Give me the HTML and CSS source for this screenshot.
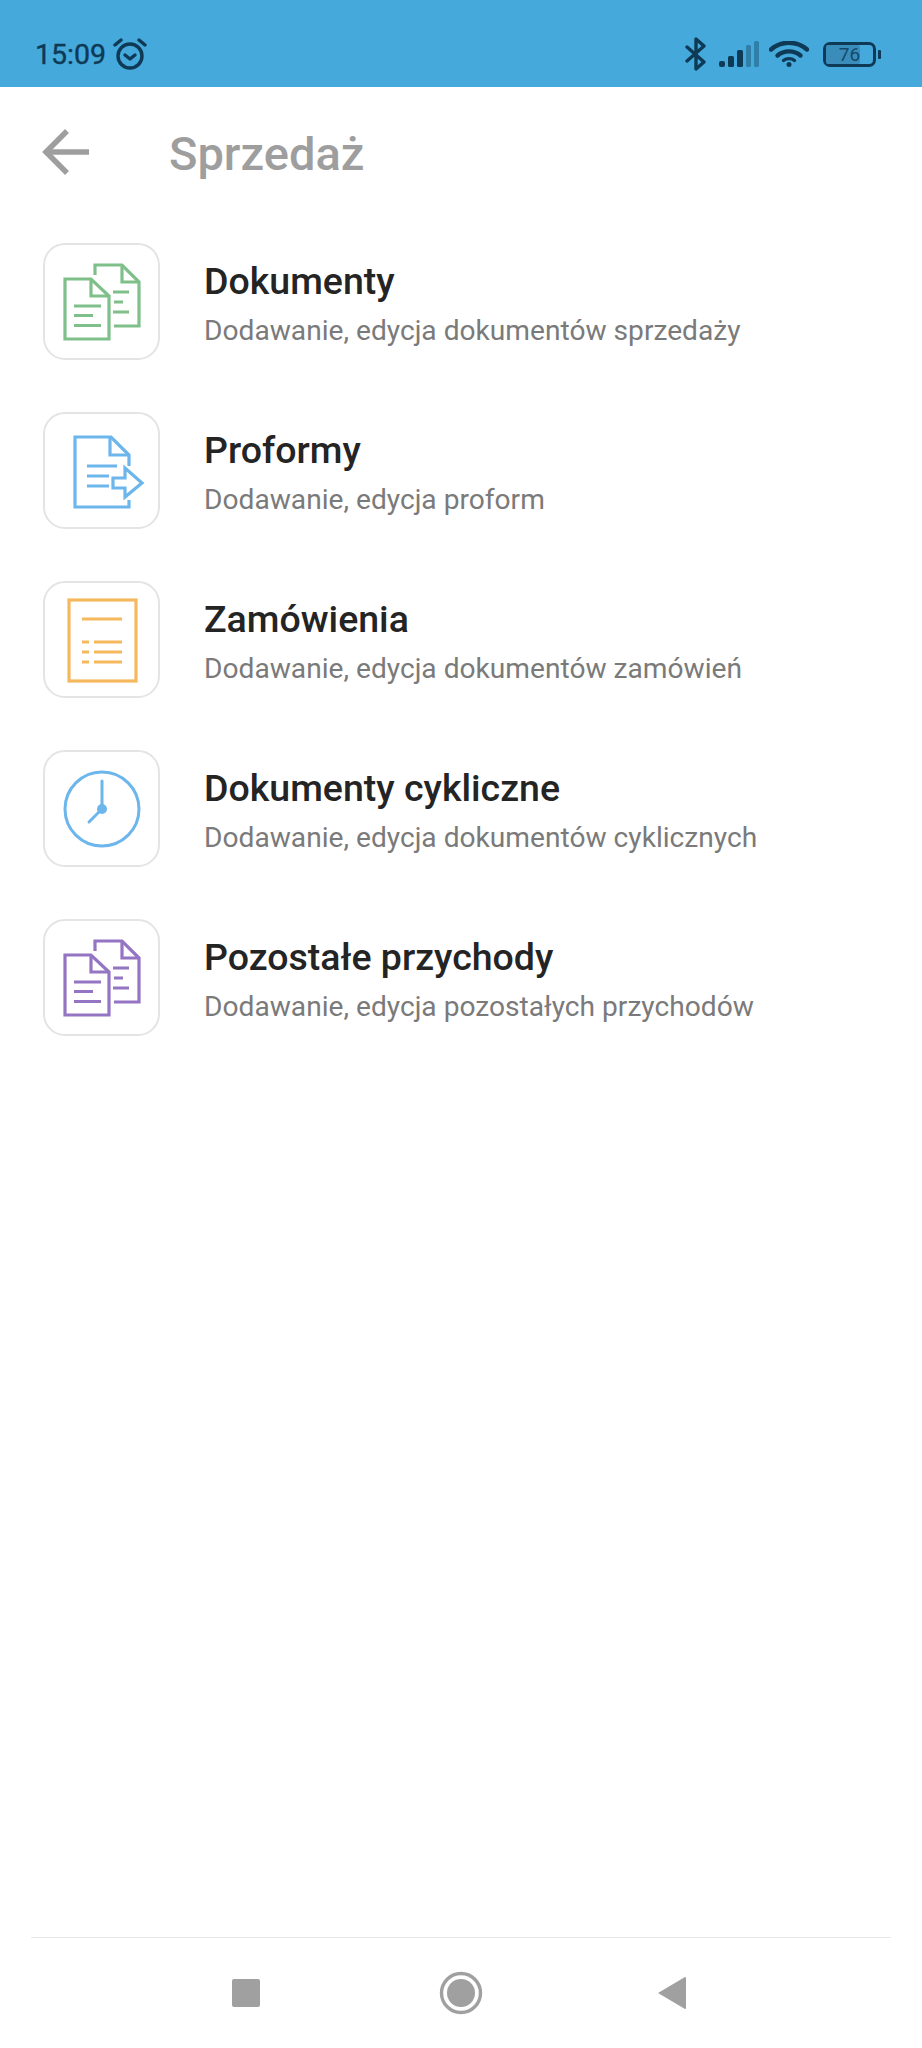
FILE: index.html
```html
<!DOCTYPE html>
<html lang="pl">
<head>
    <meta charset="UTF-8">
    <meta name="viewport" content="width=device-width, initial-scale=1.0">
    <title>Sprzedaż</title>
    <link rel="stylesheet" href="styles.css">
</head>
<body>
    <div id="app">
        <div class="status-bar">
            <span class="time">15:09</span>
            <svg class="alarm" width="34" height="34" viewBox="0 0 34 34" fill="none" stroke="currentColor" stroke-width="3.4" stroke-linecap="round" stroke-linejoin="round">
                <circle cx="17" cy="19" r="12"/>
                <path d="M12 18l5 4 5-4"/>
                <path d="M2 8l6-5M32 8l-6-5"/>
            </svg>
            <div class="status-right">
                <svg class="bluetooth" width="22" height="34" viewBox="0 0 22 34" fill="none" stroke="currentColor" stroke-width="3.4" stroke-linejoin="round" stroke-linecap="round">
                    <path d="M2 10l17 15-8 7V2l8 7L2 24"/>
                </svg>
                <svg class="signal" width="41" height="26" viewBox="0 0 41 26">
                    <rect x="0" y="20" width="6" height="6" rx="2" fill="#0e3a56"/>
                    <rect x="9" y="15" width="6" height="11" rx="1.5" fill="#0e3a56"/>
                    <rect x="18" y="9" width="6" height="17" rx="1.5" fill="#0e3a56"/>
                    <rect x="27" y="4" width="5" height="22" rx="1.5" fill="#2f7fa9"/>
                    <rect x="35" y="0" width="5" height="26" rx="1.5" fill="#2f7fa9"/>
                </svg>
                <svg class="wifi" width="40" height="26" viewBox="0 0 40 26" fill="none" stroke="currentColor" stroke-width="4.4" stroke-linecap="round">
                    <path d="M2 8.5C12-.5 28-.5 38 8.5"/>
                    <path d="M8.5 14.5c6.500-5.500 16.500-5.500 23 0"/>
                    <path d="M14.500 19.500c3-2.500 8-2.500 11 0" stroke-width="3.400"/>
                    <circle cx="20" cy="23.500" r="2.500" fill="currentColor" stroke="none"/>
                </svg>
                <div class="battery">
                    <div class="battery-body">
                        <div class="battery-fill"></div>
                        <span class="battery-text">76</span>
                    </div>
                    <div class="battery-nub"></div>
                </div>
            </div>
        </div>

        <div class="header">
            <svg class="back" width="48" height="46" viewBox="0 0 48 46" fill="none" stroke="#9e9e9e" stroke-width="5.500">
                <path d="M47 23H4"/>
                <path d="M25 2L4 23l21 21"/>
            </svg>
            <span class="page-title">Sprzedaż</span>
        </div>

        <div class="menu-list">
            <div class="menu-item">
                <div class="menu-icon green">
                    <svg width="116" height="116" viewBox="0 0 116 116" fill="none" stroke="currentColor" stroke-width="3.200">
                        <path d="M21 35h26l18 17v43H21z"/>
                        <path d="M47 35v17h18"/>
                        <path d="M30 62h27M30 71.500h19M30 81.500h27"/>
                        <path d="M51 31V21h27l17 17v44H70"/>
                        <path d="M78 21v17h17"/>
                        <path d="M69 48h16M70 58h9M69 68h16"/>
                    </svg>
                </div>
                <div class="menu-text">
                    <div class="menu-title">Dokumenty</div>
                    <div class="menu-sub">Dodawanie, edycja dokumentów sprzedaży</div>
                </div>
            </div>
            <div class="menu-item">
                <div class="menu-icon blue">
                    <svg width="116" height="116" viewBox="0 0 116 116" fill="none" stroke="currentColor" stroke-width="3.200">
                        <path d="M85 53V42L67 24H31v70h54v-7"/>
                        <path d="M66 24v18h19"/>
                        <path d="M43 53h30M43 63h22M43 73h22"/>
                        <path d="M69 65h12V55l17 15-17 14V75H69z"/>
                    </svg>
                </div>
                <div class="menu-text">
                    <div class="menu-title">Proformy</div>
                    <div class="menu-sub">Dodawanie, edycja proform</div>
                </div>
            </div>
            <div class="menu-item">
                <div class="menu-icon orange">
                    <svg width="116" height="116" viewBox="0 0 116 116" fill="none" stroke="currentColor" stroke-width="3.200">
                        <rect x="25" y="18" width="67" height="81"/>
                        <path d="M38 37h40M38 60h7M50 60h28M38 70h7M50 70h28M38 80h7M50 80h28"/>
                    </svg>
                </div>
                <div class="menu-text">
                    <div class="menu-title">Zamówienia</div>
                    <div class="menu-sub">Dodawanie, edycja dokumentów zamówień</div>
                </div>
            </div>
            <div class="menu-item">
                <div class="menu-icon blue">
                    <svg width="116" height="116" viewBox="0 0 116 116" fill="none" stroke="currentColor" stroke-width="3">
                        <circle cx="58" cy="58" r="37"/>
                        <path d="M58 30v28L45 71" stroke-linecap="round"/>
                        <circle cx="58" cy="58" r="5" fill="currentColor" stroke="none"/>
                    </svg>
                </div>
                <div class="menu-text">
                    <div class="menu-title">Dokumenty cykliczne</div>
                    <div class="menu-sub">Dodawanie, edycja dokumentów cyklicznych</div>
                </div>
            </div>
            <div class="menu-item">
                <div class="menu-icon purple">
                    <svg width="116" height="116" viewBox="0 0 116 116" fill="none" stroke="currentColor" stroke-width="3.200">
                        <path d="M21 35h26l18 17v43H21z"/>
                        <path d="M47 35v17h18"/>
                        <path d="M30 62h27M30 71.500h19M30 81.500h27"/>
                        <path d="M51 31V21h27l17 17v44H70"/>
                        <path d="M78 21v17h17"/>
                        <path d="M69 48h16M70 58h9M69 68h16"/>
                    </svg>
                </div>
                <div class="menu-text">
                    <div class="menu-title">Pozostałe przychody</div>
                    <div class="menu-sub">Dodawanie, edycja pozostałych przychodów</div>
                </div>
            </div>
        </div>

        <div class="nav-bar">
            <svg width="56" height="56" viewBox="0 0 56 56"><rect x="14" y="14" width="28" height="28" rx="2" fill="#a0a0a0"/></svg>
            <svg width="56" height="56" viewBox="0 0 56 56" fill="#a0a0a0"><circle cx="28" cy="28" r="19.500" fill="none" stroke="#a0a0a0" stroke-width="3.400"/><circle cx="28" cy="28" r="14"/></svg>
            <svg width="56" height="56" viewBox="0 0 56 56"><path d="M10 28L37 12a1 1 0 0 1 1 1v30a1 1 0 0 1-1 1z" fill="#a0a0a0"/></svg>
        </div>
    </div>
</body>
</html>
```

FILE: styles.css
```css
body {
    margin: 0;
    font-family: Roboto, "Liberation Sans", sans-serif;
    background-color: #fff;
}

#app {
    display: flex;
    flex-direction: column;
    width: 922px;
    height: 2048px;
}

.status-bar {
    display: flex;
    align-items: flex-end;
    height: 87px;
    box-sizing: border-box;
    padding: 0 41px 16px 35px;
    background-color: #45a9dc;
    color: #0e3a56;
}

.time {
    font-size: 28.5px;
    line-height: 34px;
    position: relative;
    top: 1px;
    -webkit-text-stroke: 0.4px #0e3a56;
}

.alarm {
    margin-left: 7px;
}

.status-right {
    display: flex;
    align-items: center;
    margin-left: auto;
    margin-bottom: -1px;
    height: 36px;
}

.bluetooth {
    margin-right: 12px;
}

.signal {
    margin-right: 9px;
}

.wifi {
    margin-right: 14px;
}

.battery {
    display: flex;
    align-items: center;
}

.battery-body {
    position: relative;
    width: 53px;
    height: 25px;
    box-sizing: border-box;
    border: 3px solid #0e3a56;
    border-radius: 7px;
}

.battery-fill {
    width: 34px;
    height: 100%;
    border-radius: 2px;
    background-color: #3a8dbb;
}

.battery-text {
    position: absolute;
    top: 0;
    left: 0;
    right: 0;
    text-align: center;
    font-size: 19px;
    line-height: 19px;
    color: #14486a;
}

.battery-nub {
    width: 3px;
    height: 9px;
    margin-left: 2px;
    border-radius: 1px;
    background-color: #0e3a56;
}

.header {
    display: flex;
    align-items: center;
    height: 130px;
    padding-left: 42px;
}

.page-title {
    margin-left: 79px;
    padding-top: 3px;
    font-size: 47px;
    font-weight: 500;
    color: #9e9e9e;
}

.menu-list {
    display: flex;
    flex-direction: column;
    gap: 52px;
    padding: 26px 0 0 43px;
}

.menu-item {
    display: flex;
    align-items: center;
    gap: 44px;
}

.menu-icon {
    width: 117px;
    height: 117px;
    box-sizing: border-box;
    border: 2px solid #e4e4e4;
    border-radius: 22px;
}

.menu-icon svg {
    display: block;
    margin: -1.5px;
}

.green { color: #7fc08a; }
.blue { color: #6cb6ec; }
.orange { color: #f5b85c; }
.purple { color: #9475c4; }

.menu-text {
    padding-top: 5px;
}

.menu-title {
    font-size: 37.5px;
    font-weight: 500;
    line-height: 50px;
    color: #242424;
}

.menu-sub {
    margin-top: 3px;
    font-size: 28.15px;
    line-height: 44px;
    color: #7a7a7a;
}

.nav-bar {
    display: flex;
    align-items: center;
    gap: 159px;
    height: 110px;
    margin: auto 31px 0;
    padding-left: 187px;
    border-top: 1px solid #e8e8e8;
}
```
